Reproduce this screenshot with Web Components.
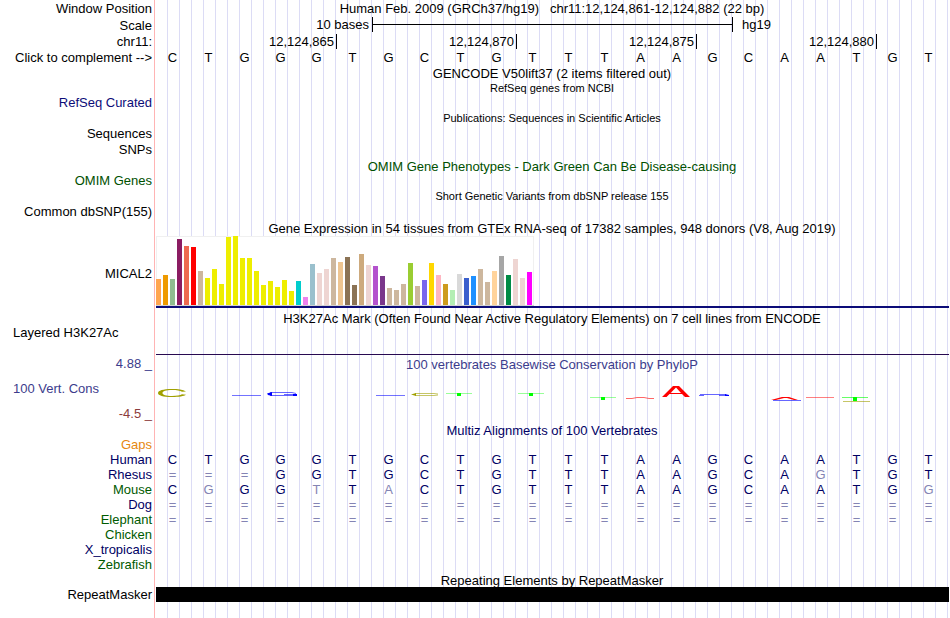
<!DOCTYPE html>
<html lang="en">
<head>
<meta charset="utf-8">
<title>Genome Browser: chr11:12,124,861-12,124,882</title>
<style>
  body { margin: 0; background: #fff; color: #000; font: 13px/15px "Liberation Sans", Arial, sans-serif; }
</style>
</head>
<body>
<genome-browser>
  <track-row tall><span slot="label">Window Position</span><track-title>Human Feb. 2009 (GRCh37/hg19)&nbsp;&nbsp; chr11:12,124,861-12,124,882 (22 bp)</track-title></track-row>
  <track-row tall><span slot="label">Scale</span><scale-bar length="10 bases" assembly="hg19"></scale-bar></track-row>
  <track-row medium><span slot="label">chr11:</span><position-ruler ticks="12,124,865 12,124,870 12,124,875 12,124,880"></position-ruler></track-row>
  <track-row><complement-button slot="label"></complement-button><base-sequence bases="CTGGGTGCTGTTTAAGCAATGT"></base-sequence></track-row>

  <track-row><track-title>GENCODE V50lift37 (2 items filtered out)</track-title></track-row>
  <track-row><track-title small>RefSeq genes from NCBI</track-title></track-row>
  <track-row><span slot="label" style="color:#0c0c78">RefSeq Curated</span></track-row>
  <track-row medium><track-title small>Publications: Sequences in Scientific Articles</track-title></track-row>
  <track-row medium><span slot="label">Sequences</span></track-row>
  <track-row medium><span slot="label">SNPs</span></track-row>
  <track-row><track-title style="color:#005000">OMIM Gene Phenotypes - Dark Green Can Be Disease-causing</track-title></track-row>
  <track-row><span slot="label" style="color:#005000">OMIM Genes</span></track-row>
  <track-row medium><track-title small>Short Genetic Variants from dbSNP release 155</track-title></track-row>
  <track-row medium><span slot="label">Common dbSNP(155)</span></track-row>
  <track-row medium><track-title>Gene Expression in 54 tissues from GTEx RNA-seq of 17382 samples, 948 donors (V8, Aug 2019)</track-title></track-row>
  <track-row middle><span slot="label">MICAL2</span><expression-chart></expression-chart></track-row>

  <track-row tall><track-title low>H3K27Ac Mark (Often Found Near Active Regulatory Elements) on 7 cell lines from ENCODE</track-title></track-row>
  <track-row left><span slot="label">Layered H3K27Ac</span><signal-track></signal-track></track-row>
  <track-row>
    <axis-labels slot="label" top="4.88 _" name="100 Vert. Cons" bottom="-4.5 _"></axis-labels>
    <conservation-logo><track-title style="color:#3c3c8c">100 vertebrates Basewise Conservation by PhyloP</track-title></conservation-logo>
  </track-row>

  <track-row><track-title style="color:#000064">Multiz Alignments of 100 Vertebrates</track-title></track-row>
  <track-row><span slot="label" style="color:#e6870f">Gaps</span></track-row>
  <track-row><span slot="label" style="color:#000064">Human</span><base-sequence aligned bases="CTGGGTGCTGTTTAAGCAATGT"></base-sequence></track-row>
  <track-row><span slot="label" style="color:#000064">Rhesus</span><base-sequence aligned bases="===GGTGCTGTTTAAGCAgTGT"></base-sequence></track-row>
  <track-row><span slot="label" style="color:#005a00">Mouse</span><base-sequence aligned bases="CgGGtTaCTGTTTAAGCAATGg"></base-sequence></track-row>
  <track-row><span slot="label" style="color:#000064">Dog</span><base-sequence aligned bases="======================"></base-sequence></track-row>
  <track-row><span slot="label" style="color:#005a00">Elephant</span><base-sequence aligned bases="======================"></base-sequence></track-row>
  <track-row><span slot="label" style="color:#005a00">Chicken</span></track-row>
  <track-row><span slot="label" style="color:#000064">X_tropicalis</span></track-row>
  <track-row><span slot="label" style="color:#005a00">Zebrafish</span></track-row>
  <track-row><track-title>Repeating Elements by RepeatMasker</track-title></track-row>
  <track-row><span slot="label">RepeatMasker</span><repeat-block></repeat-block></track-row>
  <track-row fill></track-row>
</genome-browser>

<script>
const define = (name, render) => customElements.define(name, class extends HTMLElement {
  constructor() { super(); this.attachShadow({ mode: 'open' }); }
  connectedCallback() { this.shadowRoot.innerHTML = render(this); }
});

define('genome-browser', () => `
  <style>:host { display: flex; flex-direction: column; min-height: 100vh; overflow-x: clip; }</style>
  <slot></slot>`);

/* One row: label column with the red divider, then the plot with its guide lines. */
define('track-row', () => `
  <style>
    :host { display: grid; grid-template-columns: 155px minmax(0, 1fr); min-height: 15px; flex: none; white-space: nowrap; }
    :host([medium]) { min-height: 16px; }
    :host([tall]) { min-height: 17px; line-height: 17px; }
    :host([fill]) { flex: 1; }
    .label { box-sizing: border-box; border-right: 1px solid #ffb4b4; padding-right: 2px; text-align: right; }
    :host([left]) .label { text-align: left; padding-left: 13px; }
    :host([middle]) .label { display: flex; align-items: center; justify-content: flex-end; padding-top: 3px; }
    .plot {
      margin: 0 2px 0 1px; min-width: 0;
      background: linear-gradient(to left, #dcdcf5 1px, transparent 1px) 0 0 / calc(100% / 66) 100%;
    }
  </style>
  <div class="label"><slot name="label"></slot></div>
  <div class="plot"><slot></slot></div>`);

define('track-title', () => `
  <style>
    :host { display: block; height: 15px; line-height: 17px; text-align: center; }
    :host([small]) { font-size: 11px; }
    :host([low]) { padding-top: 2px; }
  </style>
  <slot></slot>`);

define('complement-button', () => `
  <style>
    :host { display: block; }
    button { all: unset; cursor: pointer; font: inherit; color: inherit; }
  </style>
  <button type="button">Click to complement --&gt;</button>`);

define('scale-bar', el => `
  <style>
    :host { display: grid; grid-template-columns: 6fr 10fr 6fr; line-height: 15px; }
    .length { text-align: right; padding-right: 3px; }
    .bar { height: 15px; margin-right: -1px; border: solid #000; border-width: 0 1px; box-sizing: border-box;
      background: linear-gradient(#000, #000) 0 7px / 100% 1px no-repeat; }
    .assembly { padding-left: 10px; }
  </style>
  <span class="length">${el.getAttribute('length')}</span><span class="bar"></span><span class="assembly">${el.getAttribute('assembly')}</span>`);

define('position-ruler', el => `
  <style>
    :host { display: grid; grid-template-columns: repeat(4, 5fr) 2fr; line-height: 15px; }
    span { text-align: right; margin-right: -1px; padding-right: 2px; border-right: 1px solid #000; }
  </style>
  ${el.getAttribute('ticks').split(' ').map(t => `<span>${t}</span>`).join('')}`);

/* Upper-case letters agree with the first species; lower-case ones differ and are drawn pale. */
define('base-sequence', el => `
  <style>
    :host { display: grid; grid-template-columns: repeat(22, minmax(0, 1fr)); text-align: center; }
    :host([aligned]) { color: #000064; }
    span { padding-right: 3px; }
    .pale { color: #8484b4; }
  </style>
  ${[...el.getAttribute('bases')].map(b => `<span${/[A-Z]/.test(b) ? '' : ' class="pale"'}>${b.toUpperCase()}</span>`).join('')}`);

const tissues = `26 FFA54F,30 EE9A00,26 8FBC8F,66 8B1C62,59 EE6A50,58 FF0000,34 CDB79E,27 EEEE00,36 EEEE00,21 EEEE00,68 EEEE00,69 EEEE00,47 EEEE00,47 EEEE00,34 EEEE00,20 EEEE00,24 EEEE00,18 EEEE00,25 EEEE00,14 EEEE00,24 00CDCD,8 EE82EE,41 9AC0CD,32 EED5D2,36 EED5D2,47 CDB79E,43 EEC591,48 8B7355,20 8B7355,51 CDAA7D,40 EED5D2,39 B452CD,29 7A378B,17 CDB79E,15 CDB79E,21 CDB79E,42 9ACD32,19 CDB79E,25 7A67EE,42 FFD700,30 FFB6C1,21 CD9B1D,15 B4EEB4,31 D9D9D9,27 3A5FCD,29 1E90FF,36 CDB79E,23 CDB79E,34 FFD39B,49 A6A6A6,30 008B45,46 EED5D2,27 EED5D2,33 FF00FF`.split(',').map(t => t.split(' '));

define('expression-chart', () => `
  <style>
    :host { display: block; border-bottom: 2px solid #0c0c78; margin-right: -1px; }
    .bars { display: flex; align-items: flex-end; gap: 2px; width: max-content; height: 70px; box-sizing: border-box;
      padding-right: 2px; background: #fff; border-bottom: 1px solid #d2d2d2; box-shadow: inset 0 1px #f0f0f0, inset -1px 0 #f0f0f0, inset 1px 0 #f0f0f0; }
    i { width: 5px; }
  </style>
  <div class="bars">${tissues.map(([h, c]) => `<i style="height:${h}px;background:#${c}"></i>`).join('')}</div>`);

define('signal-track', () => `
  <style>:host { display: block; box-sizing: border-box; height: 30px; border-bottom: 1px solid #280a50; margin-right: -1px; }</style>`);

define('axis-labels', el => `
  <style>
    :host { display: flex; flex-direction: column; gap: 10px; padding: 1px 0 1px 13px; color: #3c3c8c; }
    .name { text-align: left; }
    .low { color: #8c3c3c; }
  </style>
  <span>${el.getAttribute('top')}</span><span class="name">${el.getAttribute('name')}</span><span class="low">${el.getAttribute('bottom')}</span>`);

define('conservation-logo', () => `
  <style>
    :host { display: block; padding-top: 1px; }
    svg { display: block; width: 100%; height: 51px; }
  </style>
  <slot></slot>
  <svg viewBox="0 371 792 51" preserveAspectRatio="none" fill="none" aria-hidden="true">
    <g transform="translate(-156 0)">
      <path fill="#a0a000" d="M186 391.500C183 389.500 178 389 172 389C163 389 158 390.600 158 393C158 395.500 163 397 172 397C179 397 184 396.300 186 394.800L182 394.300C180 395.500 177 396 172 396C166 396 162.500 395 162.500 393C162.500 391 166 390 172 390C177 390 180 390.500 182 391.800Z"/>
      <path stroke="#00f" stroke-opacity=".55" d="M232 395.500H261M376 395.500H405"/>
      <path stroke="#00f" stroke-opacity=".6" d="M270 392.500H292L296 393.500M270 395.500H296M284 394.500H296"/>
      <path fill="#00f" d="M267 393.500L272 392V396L268 395ZM293 394H297V396H293Z"/>
      <path stroke="#a0a000" stroke-opacity=".6" d="M438 394L434 393.500H415M415 395.500H434L438 395"/>
      <path fill="#a0a000" d="M411 394.500L416 393V396Z"/>
      <path stroke="#0f0" stroke-opacity=".4" d="M446 393.500H472M518 393.500H544M590 397.500H616"/>
      <path fill="#0f0" d="M457 393H461V396H457ZM529 393H533V396H529ZM601 397H605V400H601ZM853 397H857V401H853Z"/>
      <path stroke="#f00" stroke-opacity=".6" d="M626 398.500H632L637 397.500H644L649 398.500H654"/>
      <path fill="#f00" fill-rule="evenodd" d="M662 397L673 386H679L690 397H685L682 394H669.500L666.500 397ZM670.500 393H681L676 387.500Z"/>
      <path stroke="#00f" stroke-opacity=".6" d="M699 395.500H704M700 394.500H726M719 395.500H728"/>
      <path fill="#00f" d="M725 394L729 395V396H725Z"/>
      <path stroke="#00f" stroke-opacity=".6" d="M773 400.500H801"/>
      <path fill="#f00" d="M771 400L782 397H789L798 400H794L787 398H784L776 400Z"/>
      <path stroke="#f00" stroke-opacity=".5" d="M806 397.500H834"/>
      <path stroke="#0f0" stroke-opacity=".6" d="M842 397.500H868"/>
      <path stroke="#a0a000" stroke-opacity=".6" d="M843 401.500H870"/>
    </g>
  </svg>`);

define('repeat-block', () => `
  <style>:host { display: block; height: 15px; background: #000; margin-right: -1px; }</style>`);
</script>
</body>
</html>
